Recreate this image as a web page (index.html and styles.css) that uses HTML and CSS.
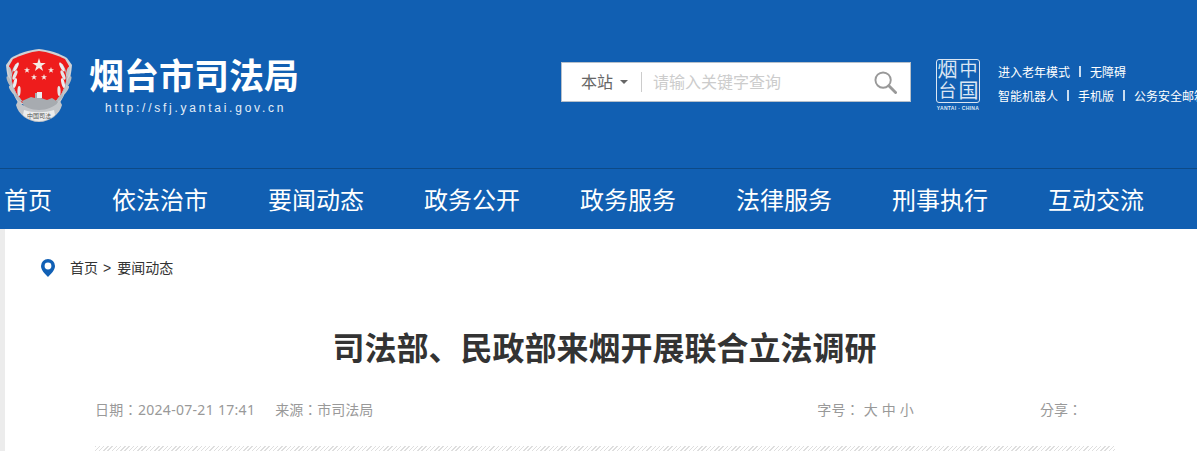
FILE: index.html
```html
<!DOCTYPE html>
<html lang="zh-CN">
<head>
  <meta charset="UTF-8">
  <title>司法部、民政部来烟开展联合立法调研</title>
  <link rel="stylesheet" href="styles.css">
</head>
<body>

<!-- Header -->
<div class="header">
  <div class="header-main">
    <div class="logo">
      <svg class="emblem" width="69" height="75" viewBox="0 0 69 75">
        <defs>
          <g id="wheat">
            <path d="M11 16C4 26 4 40 17 53" fill="none" stroke="#aeb3b8" stroke-width="1"/>
            <ellipse cx="11" cy="19" rx="1.6" ry="5" transform="rotate(28 11 19)" fill="#eceef0"/>
            <ellipse cx="5" cy="24" rx="1.6" ry="5" transform="rotate(-12 5 24)" fill="#c2c6ca"/>
            <ellipse cx="10" cy="27" rx="1.6" ry="5" transform="rotate(24 10 27)" fill="#e4e6e8"/>
            <ellipse cx="4" cy="33" rx="1.6" ry="5" transform="rotate(-22 4 33)" fill="#b6babf"/>
            <ellipse cx="10" cy="35" rx="1.6" ry="5" transform="rotate(14 10 35)" fill="#eceef0"/>
            <ellipse cx="7" cy="42" rx="1.6" ry="5" transform="rotate(-32 7 42)" fill="#c2c6ca"/>
            <ellipse cx="14" cy="43" rx="1.6" ry="5" transform="rotate(2 14 43)" fill="#e4e6e8"/>
            <ellipse cx="13" cy="50" rx="1.6" ry="5" transform="rotate(-40 13 50)" fill="#b6babf"/>
          </g>
        </defs>
        <path d="M34 1C24 2 14 5 6 10L1 17C2 30 6 44 14 56H54C62 44 66 30 67 17L62 10C54 5 44 2 34 1Z" fill="#cfd2d6"/>
        <path d="M34 3C25 4 16 7 8 11L4 18C5 30 9 44 17 55H51C59 44 63 30 64 18L60 11C52 7 43 4 34 3Z" fill="#ee1c1c"/>
        <polygon points="34,10 35.6,15 40.7,15 36.5,18 38.1,23 34,20 29.9,23 31.5,18 27.3,15 32.4,15" fill="#f5e9e4"/>
        <polygon points="22,19 22.8,21.2 25.1,21.2 23.2,22.6 23.9,24.8 22,23.5 20.1,24.8 20.8,22.6 18.9,21.2 21.2,21.2" fill="#f5e9e4"/>
        <polygon points="46,19 46.8,21.2 49.1,21.2 47.2,22.6 47.9,24.8 46,23.5 44.1,24.8 44.8,22.6 42.9,21.2 45.2,21.2" fill="#f5e9e4"/>
        <polygon points="29,26 29.8,28.2 32.1,28.2 30.2,29.6 30.9,31.8 29,30.5 27.1,31.8 27.8,29.6 25.9,28.2 28.2,28.2" fill="#f5e9e4"/>
        <polygon points="39,26 39.8,28.2 42.1,28.2 40.2,29.6 40.9,31.8 39,30.5 37.1,31.8 37.8,29.6 35.9,28.2 38.2,28.2" fill="#f5e9e4"/>
        <use href="#wheat"/>
        <use href="#wheat" transform="translate(68 0) scale(-1 1)"/>
        <path d="M17 53l9-4 4 1v-5h6v5l6 2 5-2 6 4-4 8H20z" fill="#a7abb0"/>
        <path d="M32 44h5v6h-5z" fill="#eceef0"/>
        <path d="M13 53c6 6 13 9 21 9s15-3 21-9l2 4c-2 9-12 17-23 17S13 66 11 57z" fill="#c3c6ca"/>
        <path d="M19 62c9 3 21 3 30 0l1 5c-5 4-11 6-16 6s-11-2-16-6z" fill="#eceded"/>
        <text class="emblem-text" x="34" y="70" text-anchor="middle">中国司法</text>
      </svg>
      <div class="logo-text">
        <div class="logo-title">烟台市司法局</div>
        <div class="logo-url">http://sfj.yantai.gov.cn</div>
      </div>
    </div>
    <div class="search">
      <div class="search-scope">本站<span class="caret"></span></div>
      <div class="search-input">请输入关键字查询</div>
      <svg class="search-icon" width="23" height="23" viewBox="0 0 24 24">
        <circle cx="9.5" cy="9.5" r="8" fill="none" stroke="#999" stroke-width="2"/>
        <path d="M15.5 15.5l7 7" stroke="#999" stroke-width="3" stroke-linecap="round"/>
      </svg>
    </div>
    <div class="seal">
      <div class="seal-mark">
        <span class="seal-big">烟</span><span>中</span><span>台</span><span class="seal-big">国</span>
      </div>
      <div class="seal-caption">YANTAI · CHINA</div>
    </div>
    <div class="tools">
      <div class="tools-row">
        <a>进入老年模式</a><i></i><a>无障碍</a>
      </div>
      <div class="tools-row">
        <a>智能机器人</a><i></i><a>手机版</a><i></i><a>公务安全邮箱</a>
      </div>
    </div>
  </div>
</div>

<!-- Nav -->
<div class="nav">
  <a>首页</a>
  <a>依法治市</a>
  <a>要闻动态</a>
  <a>政务公开</a>
  <a>政务服务</a>
  <a>法律服务</a>
  <a>刑事执行</a>
  <a>互动交流</a>
</div>

<!-- Content -->
<div class="page">
  <div class="article">
    <div class="crumbs">
      <svg class="pin" width="14" height="18" viewBox="0 0 14 18">
        <path fill-rule="evenodd" d="M7 0a7 7 0 0 1 7 7c0 4-4 8-7 11C4 15 0 11 0 7a7 7 0 0 1 7-7zm0 3.6a3.4 3.4 0 1 0 0 6.8 3.4 3.4 0 0 0 0-6.8z" fill="#1160b5"/>
      </svg>
      <a>首页</a><span class="sep">&gt;</span><a>要闻动态</a>
    </div>
    <h1>司法部、民政部来烟开展联合立法调研</h1>
    <div class="meta" lang="zh-Hant">
      <span class="date">日期：2024-07-21 17:41</span>
      <span class="source">来源：市司法局</span>
      <span class="size">字号： 大 中 小</span>
      <span class="share">分享：</span>
    </div>
    <div class="hatch"></div>
  </div>
</div>

</body>
</html>
```

FILE: styles.css
```css
html, body {
  margin: 0;
  height: 451px;
  overflow: hidden;
}
body {
  font-family: "Liberation Sans", "Noto Sans CJK SC", sans-serif;
  background-color: #fff;
}
.header {
  height: 168px;
  background-color: #115fb2;
  border-bottom: 1px solid #0d4a87;
}
.header-main {
  display: flex;
  align-items: flex-start;
  width: 1210px;
  padding-left: 5px;
}
.logo {
  display: flex;
  width: 556px;
  padding-top: 48px;
}
.emblem {
  display: block;
  flex-shrink: 0;
}
.emblem-text {
  font-size: 6px;
  fill: #555;
}
.logo-text {
  margin-left: 15px;
}
.logo-title {
  margin-top: 6px;
  font-size: 35px;
  line-height: 46px;
  font-weight: bold;
  color: #fff;
}
.logo-url {
  margin-top: 1px;
  margin-left: 16px;
  font-size: 12px;
  line-height: 14px;
  letter-spacing: 2.75px;
  white-space: nowrap;
  color: #e4eef8;
}
.search {
  display: flex;
  align-items: center;
  box-sizing: border-box;
  width: 350px;
  height: 40px;
  margin-top: 62px;
  background-color: #fff;
  border: 1px solid #b7c0ca;
}
.search-scope {
  display: flex;
  align-items: flex-start;
  width: 60px;
  height: 20px;
  margin-left: 19px;
  border-right: 1px solid #ccc;
  font-size: 16px;
  line-height: 22px;
  color: #666;
}
.caret {
  align-self: center;
  margin-left: 7px;
  border-top: 4px solid #666;
  border-left: 4px solid transparent;
  border-right: 4px solid transparent;
}
.search-input {
  flex: 1;
  margin-left: 11px;
  margin-bottom: 2px;
  font-size: 16px;
  color: #ccc;
}
.search-icon {
  margin-right: 13px;
}
.seal {
  width: 44px;
  margin-top: 59px;
  margin-left: 25px;
}
.seal-mark {
  display: grid;
  grid-template-columns: 1fr 1fr;
  box-sizing: border-box;
  width: 44px;
  height: 44px;
  border: 1px solid #dbe6f3;
  border-radius: 3px;
  font-size: 18px;
  line-height: 21px;
  text-align: center;
  color: #dbe6f3;
}
.seal-big {
  font-size: 20px;
}
.seal-caption {
  margin-top: 2px;
  font-size: 5px;
  line-height: 6px;
  font-weight: bold;
  letter-spacing: 0.3px;
  white-space: nowrap;
  text-align: center;
  color: #dbe6f3;
}
.tools {
  margin-top: 59px;
  margin-left: 18px;
  font-size: 12px;
  color: #fff;
}
.tools-row {
  display: flex;
  align-items: center;
  height: 24px;
  white-space: nowrap;
}
.tools-row i {
  width: 2px;
  height: 11px;
  margin: 0 9px;
  background-color: #c8dcf0;
}
.nav {
  display: flex;
  gap: 60px;
  height: 60px;
  padding-left: 4px;
  background-color: #115fb2;
  font-size: 24px;
  line-height: 63px;
  color: #fff;
  white-space: nowrap;
}
.page {
  height: 222px;
  padding-left: 5px;
  background-color: #ececec;
}
.article {
  height: 222px;
  background-color: #fff;
}
.crumbs {
  display: flex;
  align-items: center;
  padding: 30px 0 0 36px;
  font-size: 14px;
  line-height: 18px;
  color: #333;
}
.pin {
  margin-right: 15px;
}
.sep {
  margin: 0 6px 0 5px;
}
h1 {
  margin: 50px 0 0;
  padding-left: 7px;
  font-size: 32px;
  line-height: 44px;
  font-weight: bold;
  text-align: center;
  color: #333;
}
.meta {
  display: flex;
  width: 1020px;
  height: 46px;
  margin: 29px 0 0 90px;
  font-family: "Noto Sans", "Noto Sans CJK TC", sans-serif;
  font-size: 14px;
  line-height: 20px;
  white-space: pre;
  color: #999;
}
.date {
  letter-spacing: 0.3px;
}
.source {
  margin-left: 20px;
}
.size {
  margin-left: 444px;
  letter-spacing: 0.2px;
}
.share {
  margin-left: 126px;
}
.hatch {
  width: 1020px;
  height: 5px;
  margin-left: 90px;
  background: repeating-linear-gradient(135deg, #dedede 0, #dedede 1px, #fff 1px, #fff 3px);
}
```
